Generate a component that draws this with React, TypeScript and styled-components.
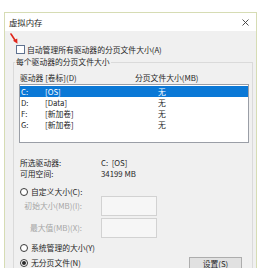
import React from 'react';
import styled, { createGlobalStyle } from 'styled-components';

const Global = createGlobalStyle`
  html, body { margin: 0; padding: 0; background: #ffffff; }
  body {
    font-family: "Noto Sans CJK SC", "Noto Sans", sans-serif;
    font-size: 7.8px;
    color: #262626;
  }
  * { box-sizing: border-box; }
`;

const Page = styled.div`
  width: 275px;
  height: 268px;
  overflow: hidden;
  padding: 12px 0 0 4px;
`;

const Dialog = styled.div`
  width: 253px;
  height: 300px;
  border: 1px solid #d6dcb4;
  border-bottom: none;
  display: flex;
  flex-direction: column;
`;

const TitleBar = styled.div`
  height: 18px;
  flex: none;
  background: #ffffff;
  display: flex;
  align-items: center;
  justify-content: space-between;
  padding: 0 7px 0 4px;
`;

const Title = styled.span`
  font-size: 8.4px;
  line-height: 10px;
  color: #1f1f1f;
`;

const Body = styled.div`
  position: relative;
  flex: 1;
  background: #f0f0f0;
  padding: 14px 3px 0 8px;
`;

const Arrow = styled.svg`
  position: absolute;
  left: 5px;
  top: 2px;
`;

const CheckRow = styled.label`
  display: flex;
  align-items: center;
  gap: 2px;
  height: 9px;
  margin-left: 3px;
  line-height: 10px;
`;

const CheckBox = styled.span`
  width: 9px;
  height: 9px;
  flex: none;
  background: #ffffff;
  border: 1px solid #5f7290;
`;

const Group = styled.fieldset`
  margin: 3px 0 0 0;
  padding: 6px 0 0 5px;
  border: 1px solid #dadada;
  border-bottom: none;
  min-width: 0;
`;

const Legend = styled.legend`
  margin-left: -4px;
  padding: 0 1px;
  line-height: 10px;
  font-size: 7.8px;
`;

const HeaderRow = styled.div`
  display: grid;
  grid-template-columns: 115px 1fr;
  padding-left: 1px;
  line-height: 10px;
  width: 230px;
`;

const ListBox = styled.div`
  margin-top: 1px;
  width: 230px;
  height: 59px;
  background: #ffffff;
  border: 1px solid #9a9ea6;
  padding-top: 1px;
`;

const ListRow = styled.div<{ $selected?: boolean }>`
  display: grid;
  grid-template-columns: 24px 113px 1fr;
  height: 11px;
  line-height: 11px;
  padding-left: 1px;
  background: ${(p) => (p.$selected ? '#0a78d6' : 'transparent')};
  color: ${(p) => (p.$selected ? '#ffffff' : '#262626')};
`;

const InfoGrid = styled.div`
  margin-top: 14px;
  display: grid;
  grid-template-columns: 81px 1fr;
  padding-left: 1px;
  line-height: 11px;
`;

const RadioRow = styled.label<{ $top: number }>`
  display: flex;
  align-items: center;
  gap: 3px;
  height: 10px;
  line-height: 10px;
  margin-top: ${(p) => p.$top}px;
  padding-left: 1px;
`;

const Radio = styled.span<{ $checked?: boolean }>`
  width: 8px;
  height: 8px;
  flex: none;
  border-radius: 50%;
  border: 1px solid #3a3a3a;
  background: #ffffff;
  display: flex;
  align-items: center;
  justify-content: center;
  &::after {
    content: '';
    width: 4px;
    height: 4px;
    border-radius: 50%;
    background: ${(p) => (p.$checked ? '#2a2a2a' : 'transparent')};
  }
`;

const SizeRow = styled.div<{ $top: number }>`
  display: grid;
  grid-template-columns: 82px 56px;
  align-items: center;
  margin-top: ${(p) => p.$top}px;
`;

const SizeLabel = styled.span`
  text-align: right;
  padding-right: 19px;
  color: #a6a6a6;
  line-height: 10px;
`;

const SizeInput = styled.div`
  height: 20px;
  background: #f6f6f6;
  border: 1px solid #d2d2d2;
`;

const BottomRow = styled.div`
  display: flex;
  align-items: flex-start;
  justify-content: space-between;
  margin-top: 4px;
  width: 230px;
  padding-right: 7px;
`;

const Button = styled.button`
  width: 53px;
  height: 15px;
  padding: 1px 0 0 0;
  font-family: inherit;
  font-size: 7.8px;
  line-height: 9px;
  color: #262626;
  background: #e1e1e1;
  border: 1px solid #adadad;
  display: flex;
  align-items: flex-start;
  justify-content: center;
`;

export default function App() {
  return (
    <>
      <Global />
      <Page>
        <Dialog>
          <TitleBar>
            <Title>虚拟内存</Title>
            <svg width="7" height="7" viewBox="0 0 7 7">
              <path d="M0.5 0.5 L6.5 6.5 M6.5 0.5 L0.5 6.5" stroke="#3a3a3a" strokeWidth="0.9" />
            </svg>
          </TitleBar>
          <Body>
            <Arrow width="9" height="12" viewBox="0 0 9 12">
              <path d="M1 1 L5.2 7.5" stroke="#e0261b" strokeWidth="1.6" strokeLinecap="round" />
              <path d="M3 7.8 L7.5 10.8 L7.2 5.6 Z" fill="#e0261b" />
            </Arrow>
            <CheckRow>
              <CheckBox />
              <span>自动管理所有驱动器的分页文件大小(A)</span>
            </CheckRow>
            <Group>
              <Legend>每个驱动器的分页文件大小</Legend>
              <HeaderRow>
                <span>驱动器 [卷标](D)</span>
                <span>分页文件大小(MB)</span>
              </HeaderRow>
              <ListBox>
                <ListRow $selected>
                  <span>C:</span>
                  <span>[OS]</span>
                  <span>无</span>
                </ListRow>
                <ListRow>
                  <span>D:</span>
                  <span>[Data]</span>
                  <span>无</span>
                </ListRow>
                <ListRow>
                  <span>F:</span>
                  <span>[新加卷]</span>
                  <span>无</span>
                </ListRow>
                <ListRow>
                  <span>G:</span>
                  <span>[新加卷]</span>
                  <span>无</span>
                </ListRow>
              </ListBox>
              <InfoGrid>
                <span>所选驱动器:</span>
                <span>C:&nbsp;&nbsp;[OS]</span>
                <span>可用空间:</span>
                <span>34199 MB</span>
              </InfoGrid>
              <RadioRow $top={8}>
                <Radio />
                <span>自定义大小(C):</span>
              </RadioRow>
              <SizeRow $top={-1}>
                <SizeLabel>初始大小(MB)(I):</SizeLabel>
                <SizeInput />
              </SizeRow>
              <SizeRow $top={2}>
                <SizeLabel>最大值(MB)(X):</SizeLabel>
                <SizeInput />
              </SizeRow>
              <RadioRow $top={5}>
                <Radio />
                <span>系统管理的大小(Y)</span>
              </RadioRow>
              <BottomRow>
                <RadioRow $top={1}>
                  <Radio $checked />
                  <span>无分页文件(N)</span>
                </RadioRow>
                <Button>设置(S)</Button>
              </BottomRow>
            </Group>
          </Body>
        </Dialog>
      </Page>
    </>
  );
}
